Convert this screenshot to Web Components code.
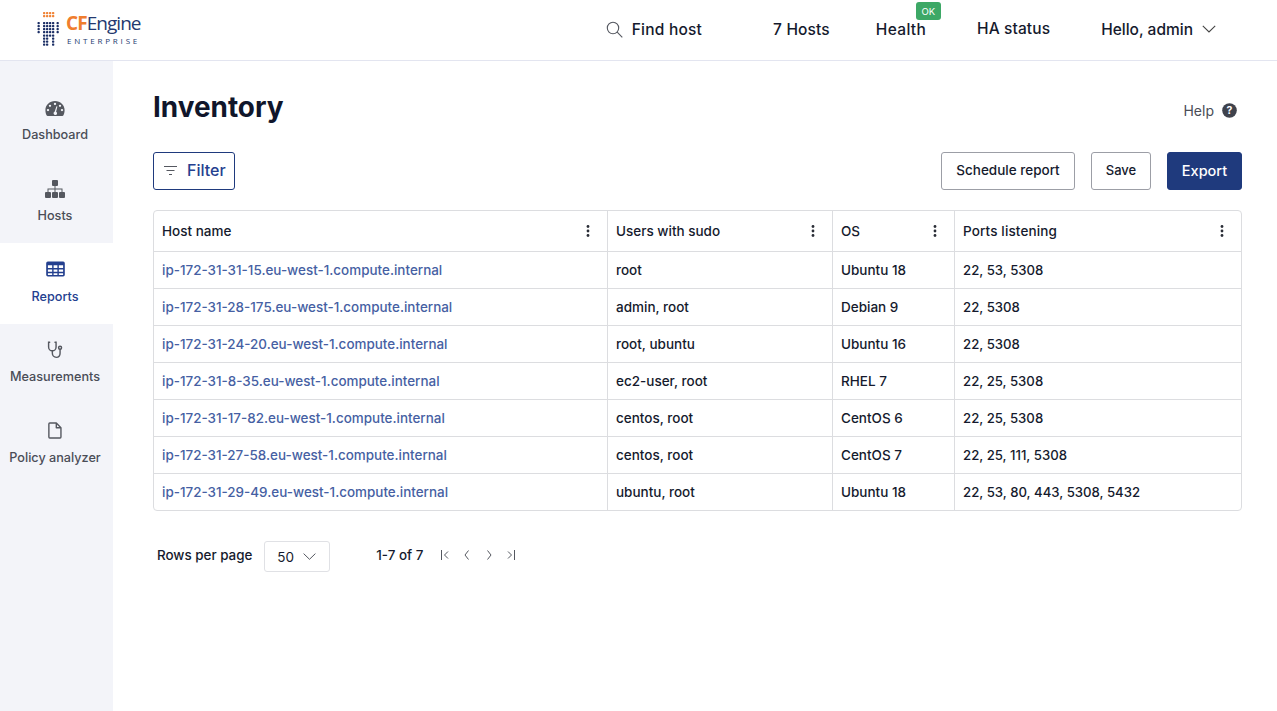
<!DOCTYPE html>
<html lang="en">
<head>
<meta charset="utf-8">
<title>Inventory</title>
<style>
  html, body { margin: 0; padding: 0; height: 100%; background: #fff; }
  body { font-family: Inter, "Liberation Sans", sans-serif; color: #151a2d; overflow: hidden; }
</style>
</head>
<body>
<inventory-app></inventory-app>

<script>
const ICONS = {
  dashboard: `<svg style="transform:translateY(1px)" width="20" height="17" viewBox="0 0 20 18" preserveAspectRatio="none"><path fill="#555860" fill-rule="evenodd" d="M10 1C4.600 1 .4 5.300.4 10.500c0 2.700.6 4.700 1.300 6 .2.300.5.500.9.500h14.800c.4 0 .7-.2.900-.5.700-1.300 1.300-3.300 1.300-6C19.600 5.300 15.400 1 10 1zM10 3a1.200 1.200 0 1 1 0 2.400A1.200 1.200 0 0 1 10 3zM5 5a1.200 1.200 0 1 1 0 2.400A1.200 1.200 0 0 1 5 5zm10 0a1.200 1.200 0 1 1 0 2.400A1.200 1.200 0 0 1 15 5zM3 9.500a1.200 1.200 0 1 1 0 2.400 1.200 1.200 0 0 1 0-2.400zm14 0a1.200 1.200 0 1 1 0 2.400 1.200 1.200 0 0 1 0-2.400zM11.500 6.500l.9.300-1.300 5.700a1.900 1.900 0 0 1-.6 3.500 1.900 1.900 0 0 1-.9-3.600z"/></svg>`,
  hosts: `<svg style="transform:translateY(1px)" width="20" height="18" viewBox="0 0 20 18"><g fill="#555860"><rect x="7" y="0" width="6" height="6" rx="1"/><rect x="0" y="12" width="6" height="6" rx="1"/><rect x="7" y="12" width="6" height="6" rx="1"/><rect x="14" y="12" width="6" height="6" rx="1"/><path d="M9.500 6h1v2.500H17.500V12h-1V9.500h-6V12h-1V9.500h-6V12h-1V8.500h7z"/></g></svg>`,
  reports: `<svg width="19" height="16" viewBox="0 0 20 17" preserveAspectRatio="none"><path fill="#24408f" fill-rule="evenodd" d="M2 .5h16A1.800 1.800 0 0 1 19.800 2.300v12.400A1.800 1.800 0 0 1 18 16.500H2A1.800 1.800 0 0 1 .2 14.700V2.300A1.800 1.800 0 0 1 2 .5zM2 4.500v3h4.500v-3zm6 0v3h4v-3zm5.500 0v3H18v-3zM2 9v2.500h4.500V9zm6 0v2.500h4V9zm5.500 0v2.500H18V9zM2 13v2h4.500v-2zm6 0v2h4v-2zm5.500 0v2H18v-2z"/></svg>`,
  stethoscope: `<svg width="16" height="18" viewBox="0 0 18 20" fill="none" stroke="#555860" stroke-width="1.600" stroke-linecap="round"><path d="M3 1.200H1.800v5.300c0 2.500 1.900 4.400 4.200 4.400s4.200-1.900 4.200-4.400V1.200H9"/><path d="M6 11v2.500c0 2.700 1.900 4.800 4.400 4.800s4.300-2 4.300-4.600V9.500"/><circle cx="14.700" cy="7.500" r="1.700"/></svg>`,
  file: `<svg width="14" height="17" viewBox="0 0 16 19" fill="none" stroke="#555860" stroke-width="1.600" stroke-linejoin="round"><path d="M2 1h7.500L14.800 6.300V17a1 1 0 0 1-1 1H2a1 1 0 0 1-1-1V2a1 1 0 0 1 1-1z"/><path d="M9.500 1v5.300h5.300"/></svg>`
};

class AppLogo extends HTMLElement {
  connectedCallback() {
    const root = this.attachShadow({ mode: 'open' });
    // dot matrix mark, drawn from rows of small dots
    let dots = '';
    const put = (x, y, fill) => { dots += `<rect x="${x}" y="${y}" width="2.300" height="2.300" rx=".7" fill="${fill}"/>`; };
    for (const y of [0, 3]) for (const x of [6, 9, 12, 15]) put(x, y, '#f08437');
    for (const y of [10, 13, 16, 19]) { put(0.500, y, '#1c2f66'); put(19.500, y, '#1c2f66'); }
    for (const y of [10, 13, 16, 19]) for (const x of [6, 9, 12, 15]) put(x, y, '#1c2f66');
    for (const x of [6, 9, 12, 15]) put(x, 22.500, '#1c2f66');
    for (const y of [25.500, 28.500, 31.500]) { put(6, y, '#1c2f66'); put(9, y, '#1c2f66'); put(15, y, '#1c2f66'); }
    root.innerHTML = `
      <style>
        :host { display: flex; align-items: center; gap: 7px; margin-bottom: 2px; }
        .txt { display: flex; flex-direction: column; }
        .name { font: 400 19px/21px "Open Sans", sans-serif; color: #24396f; letter-spacing: -.95px; white-space: nowrap; }
        .name b { font-weight: 700; color: #f07d2e; }
        .sub { font: 500 8px/9px "Open Sans", sans-serif; letter-spacing: 2.800px; color: #24396f; margin: 2px 0 0 1px; white-space: nowrap; }
      </style>
      <svg width="22" height="34" viewBox="0 0 22 34">${dots}</svg>
      <div class="txt"><div class="name"><b>CF</b>Engine</div><div class="sub">ENTERPRISE</div></div>
    `;
  }
}

class AppHeader extends HTMLElement {
  connectedCallback() {
    const root = this.attachShadow({ mode: 'open' });
    root.innerHTML = `
      <style>
        :host { display: flex; align-items: center; box-sizing: border-box; height: 61px; border-bottom: 1px solid #e3e5f0; padding: 0 61px 0 37px; background: #fff; font-size: 15.500px; font-weight: 500; color: #151a2d; }
        app-logo { margin-right: auto; }
        .item { display: flex; align-items: center; position: relative; white-space: nowrap; height: 20px; margin-bottom: 2px; }
        .find { gap: 9px; margin-right: 71px; letter-spacing: .22px; }
        .hosts { margin-right: 46px; letter-spacing: .14px; }
        .health { margin-right: 51px; letter-spacing: .32px; }
        .ha { margin-right: 51px; position: relative; top: -1px; letter-spacing: .1px; }
        .user { gap: 9px; }
        .badge { position: absolute; left: 40px; top: -17px; width: 25px; height: 18px; background: #3da866; color: #fff; border-radius: 3px; font-size: 9.500px; font-weight: 400; letter-spacing: 0; display: flex; align-items: center; justify-content: center; }
      </style>
      <app-logo></app-logo>
      <div class="item find">
        <svg width="17" height="17" viewBox="0 0 17 17" fill="none" stroke="#555860" stroke-width="1.100"><circle cx="7" cy="7" r="5.700"/><path d="M11.200 11.200 16.300 16.300"/></svg>
        <span>Find host</span>
      </div>
      <div class="item hosts">7 Hosts</div>
      <div class="item health">Health<span class="badge">OK</span></div>
      <div class="item ha">HA status</div>
      <div class="item user">
        <span>Hello, admin</span>
        <svg width="14" height="8" viewBox="0 0 14 8" fill="none" stroke="#444" stroke-width="1.100"><path d="M.8.800 7 7l6.200-6.200"/></svg>
      </div>
    `;
  }
}

class NavItem extends HTMLElement {
  connectedCallback() {
    const root = this.attachShadow({ mode: 'open' });
    root.innerHTML = `
      <style>
        :host { display: flex; flex-direction: column; align-items: center; box-sizing: border-box; height: 80.750px; padding: 16px 3px 0 0; color: #4a4d57; font-size: 12.650px; font-weight: 500; white-space: nowrap; }
        :host([active]) { background: #fff; color: #24408f; }
        .ic { height: 20px; display: flex; align-items: center; justify-content: center; }
        .lb { margin-top: 9.500px; line-height: 16px; }
      </style>
      <div class="ic">${ICONS[this.getAttribute('icon')]}</div>
      <div class="lb"><slot></slot></div>
    `;
  }
}

class SideNav extends HTMLElement {
  connectedCallback() {
    const root = this.attachShadow({ mode: 'open' });
    root.innerHTML = `
      <style>
        :host { display: block; width: 113px; flex: none; background: #f3f4f9; padding-top: 20.500px; box-sizing: border-box; }
      </style>
      <nav-item icon="dashboard">Dashboard</nav-item>
      <nav-item icon="hosts">Hosts</nav-item>
      <nav-item icon="reports" active>Reports</nav-item>
      <nav-item icon="stethoscope">Measurements</nav-item>
      <nav-item icon="file">Policy analyzer</nav-item>
    `;
  }
}

class AppButton extends HTMLElement {
  connectedCallback() {
    const root = this.attachShadow({ mode: 'open' });
    root.innerHTML = `
      <style>
        :host { display: inline-flex; align-items: center; justify-content: center; box-sizing: border-box; height: 38px; padding-bottom: 2px; border: 1px solid #9c9ea6; border-radius: 3px; font-size: 13.500px; font-weight: 500; color: #151a2d; white-space: nowrap; }
        :host([kind=primary]) { background: #1f3a7d; border-color: #1f3a7d; color: #fff; font-size: 14.500px; padding-bottom: 1px; }
        :host([kind=outline]) { border-color: #1f3a7d; color: #24408f; font-size: 16px; justify-content: flex-start; padding: 0 0 2px 10px; }
      </style>
      <slot></slot>
    `;
  }
}

class DataTable extends HTMLElement {
  connectedCallback() {
    const root = this.attachShadow({ mode: 'open' });
    const cols = ['Host name', 'Users with sudo', 'OS', 'Ports listening'];
    const rows = [
      ['ip-172-31-31-15.eu-west-1.compute.internal', 'root', 'Ubuntu 18', '22, 53, 5308'],
      ['ip-172-31-28-175.eu-west-1.compute.internal', 'admin, root', 'Debian 9', '22, 5308'],
      ['ip-172-31-24-20.eu-west-1.compute.internal', 'root, ubuntu', 'Ubuntu 16', '22, 5308'],
      ['ip-172-31-8-35.eu-west-1.compute.internal', 'ec2-user, root', 'RHEL 7', '22, 25, 5308'],
      ['ip-172-31-17-82.eu-west-1.compute.internal', 'centos, root', 'CentOS 6', '22, 25, 5308'],
      ['ip-172-31-27-58.eu-west-1.compute.internal', 'centos, root', 'CentOS 7', '22, 25, 111, 5308'],
      ['ip-172-31-29-49.eu-west-1.compute.internal', 'ubuntu, root', 'Ubuntu 18', '22, 53, 80, 443, 5308, 5432']
    ];
    const dots = `<svg width="4" height="12" viewBox="0 0 4 12" fill="#2a2d36"><circle cx="2" cy="1.500" r="1.400"/><circle cx="2" cy="6" r="1.400"/><circle cx="2" cy="10.500" r="1.400"/></svg>`;
    root.innerHTML = `
      <style>
        :host { display: block; border: 1px solid #dcdde0; border-radius: 4px; font-size: 13.500px; font-weight: 500; color: #151a2d; }
        .row { display: grid; grid-template-columns: 453px 225px 122px 1fr; border-top: 1px solid #dcdde0; height: 36px; }
        .row.head { border-top: 0; height: 40px; }
        .c { display: flex; align-items: center; justify-content: space-between; padding: 0 16px 0 8px; border-left: 1px solid #dcdde0; white-space: nowrap; }
        .c:first-child { border-left: 0; }
        .row.head .c { padding-right: 17px; }
        .row.head .c:last-child span { letter-spacing: .14px; }
        .row:not(.head) .c:last-child { font-size: 13.200px; }
        a { color: #465fa3; text-decoration: none; font-size: 13.450px; }
      </style>
      <div class="row head">${cols.map(c => `<div class="c"><span>${c}</span>${dots}</div>`).join('')}</div>
      ${rows.map(r => `<div class="row"><div class="c"><a href="#">${r[0]}</a></div>${r.slice(1).map(v => `<div class="c">${v}</div>`).join('')}</div>`).join('')}
    `;
  }
}

class TablePager extends HTMLElement {
  connectedCallback() {
    const root = this.attachShadow({ mode: 'open' });
    const nav = d => `<svg width="10" height="12" viewBox="0 0 10 12" fill="none" stroke="#555860" stroke-width="1"><path d="${d}"/></svg>`;
    root.innerHTML = `
      <style>
        :host { display: flex; align-items: center; padding-left: 4px; font-size: 13.400px; font-weight: 500; color: #151a2d; white-space: nowrap; }
        .sel { display: flex; align-items: center; box-sizing: border-box; width: 66px; height: 31px; margin: 3px 0 0 12px; padding-left: 12px; gap: 9px; border: 1px solid #e0e1e5; border-radius: 3px; font-size: 13.500px; font-weight: 400; }
        .range { margin-left: 46px; margin-right: 17px; }
        .nav { display: flex; gap: 12px; }
      </style>
      <span>Rows per page</span>
      <div class="sel"><span>50</span><svg width="13" height="7" viewBox="0 0 13 7" fill="none" stroke="#555860" stroke-width="1"><path d="M.6.600 6.500 6.300 12.400.600"/></svg></div>
      <span class="range">1-7 of 7</span>
      <div class="nav">
        ${nav('M1.500 1v10M8 2.500 4.500 6 8 9.500')}
        ${nav('M6.500 1.500 3 6l3.500 4.500')}
        ${nav('M3.500 1.500 7 6l-3.500 4.500')}
        ${nav('M8.500 1v10M2 2.500 5.500 6 2 9.500')}
      </div>
    `;
  }
}

class InventoryPage extends HTMLElement {
  connectedCallback() {
    const root = this.attachShadow({ mode: 'open' });
    root.innerHTML = `
      <style>
        :host { display: block; flex: 1; min-width: 0; box-sizing: border-box; padding: 0 35px 0 40px; }
        .top { display: flex; align-items: center; justify-content: space-between; height: 91px; padding-right: 5px; }
        h1 { margin: 0; font-size: 27.900px; font-weight: 700; color: #10162b; letter-spacing: 0; }
        .help { display: flex; align-items: center; gap: 8px; margin-top: 8px; font-size: 14px; color: #4a4d57; }
        .tools { display: flex; align-items: center; gap: 16px; margin-bottom: 20px; }
        .spacer { flex: 1; }
        .filter { width: 82px; }
        .filter svg { margin-right: 10px; flex: none; }
        .schedule { width: 134px; }
        .save { width: 60px; font-size: 13px; }
        .export { width: 75px; }
        data-table { margin-bottom: 27px; }
      </style>
      <div class="top">
        <h1>Inventory</h1>
        <div class="help">Help
          <svg width="15" height="15" viewBox="0 0 15 15"><circle cx="7.500" cy="7.500" r="7.300" fill="#3f424c"/><text x="7.500" y="11.200" text-anchor="middle" fill="#fff" font-size="10.500" font-weight="700" font-family="Inter, sans-serif">?</text></svg>
        </div>
      </div>
      <div class="tools">
        <app-button kind="outline" class="filter">
          <svg width="13" height="9" viewBox="0 0 13 9" fill="none" stroke="#555860" stroke-width="1"><path d="M0 .500h13M2.500 4.500h8M5 8.500h3"/></svg>Filter
        </app-button>
        <div class="spacer"></div>
        <app-button class="schedule">Schedule report</app-button>
        <app-button class="save">Save</app-button>
        <app-button kind="primary" class="export">Export</app-button>
      </div>
      <data-table></data-table>
      <table-pager></table-pager>
    `;
  }
}

class InventoryApp extends HTMLElement {
  connectedCallback() {
    const root = this.attachShadow({ mode: 'open' });
    root.innerHTML = `
      <style>
        :host { display: flex; flex-direction: column; height: 711px; }
        .body { display: flex; flex: 1; min-height: 0; }
      </style>
      <app-header></app-header>
      <div class="body"><side-nav></side-nav><inventory-page></inventory-page></div>
    `;
  }
}

customElements.define('app-logo', AppLogo);
customElements.define('app-header', AppHeader);
customElements.define('nav-item', NavItem);
customElements.define('side-nav', SideNav);
customElements.define('app-button', AppButton);
customElements.define('data-table', DataTable);
customElements.define('table-pager', TablePager);
customElements.define('inventory-page', InventoryPage);
customElements.define('inventory-app', InventoryApp);
</script>
</body>
</html>
